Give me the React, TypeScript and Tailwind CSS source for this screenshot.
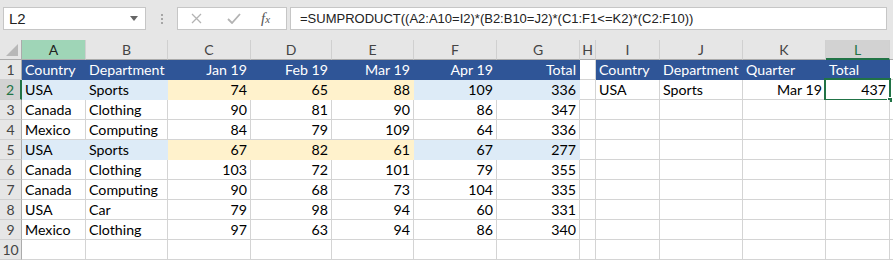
import React from 'react';

type Fill = 'none' | 'head' | 'blue' | 'yellow';

const colW = [
    'w-[22px]', 'w-[64px]', 'w-[82px]', 'w-[83px]', 'w-[81px]', 'w-[82px]', 'w-[83px]', 'w-[83px]',
    'w-[16px]', 'w-[64px]', 'w-[83px]', 'w-[83px]', 'w-[64px]',
];
const letters = ['A', 'B', 'C', 'D', 'E', 'F', 'G', 'H', 'I', 'J', 'K', 'L'];

const fillCls: Record<Fill, string> = {
    none: 'bg-white border-[#d4d4d4] text-black',
    head: 'bg-[#2f5597] border-[#2f5597] text-white',
    blue: 'bg-[#ddebf7] border-[#ddebf7] text-black',
    yellow: 'bg-[#fff2cc] border-[#fff2cc] text-black',
};

const data: (string | number)[][] = [
    ['Country', 'Department', 'Jan 19', 'Feb 19', 'Mar 19', 'Apr 19', 'Total', '', 'Country', 'Department', 'Quarter', 'Total'],
    ['USA', 'Sports', 74, 65, 88, 109, 336, '', 'USA', 'Sports', 'Mar 19', 437],
    ['Canada', 'Clothing', 90, 81, 90, 86, 347, '', '', '', '', ''],
    ['Mexico', 'Computing', 84, 79, 109, 64, 336, '', '', '', '', ''],
    ['USA', 'Sports', 67, 82, 61, 67, 277, '', '', '', '', ''],
    ['Canada', 'Clothing', 103, 72, 101, 79, 355, '', '', '', '', ''],
    ['Canada', 'Computing', 90, 68, 73, 104, 335, '', '', '', '', ''],
    ['USA', 'Car', 79, 98, 94, 60, 331, '', '', '', '', ''],
    ['Mexico', 'Clothing', 97, 63, 94, 86, 340, '', '', '', '', ''],
    ['', '', '', '', '', '', '', '', '', '', '', ''],
];

const fillFor = (r: number, c: number): Fill => {
    if (r === 0) return c === 7 ? 'none' : 'head';
    if (r === 1 || r === 4) {
        if (c === 0 || c === 1 || c === 5 || c === 6) return 'blue';
        if (c >= 2 && c <= 4) return 'yellow';
    }
    return 'none';
};

const rightAlign = (r: number, c: number) => {
    if (r === 0) return c >= 2 && c <= 6;
    if (c === 10 || c === 11) return true;
    return c >= 2 && c <= 6;
};

const Toolbar = () => (
    <div className="h-[40px] bg-[#e6e6e6] flex items-start pt-[7px] pl-[3px] gap-0">
        <div className="w-[143px] h-[23px] bg-white border border-[#c6c6c6] flex items-center justify-between pl-[5px] pr-[7px]">
            <span className="text-[15px] text-[#222] leading-none" style={{ fontFamily: '"Liberation Sans", Arial, sans-serif' }}>L2</span>
            <svg width="8" height="5" viewBox="0 0 8 5"><path d="M0 0h8L4 5z" fill="#666" /></svg>
        </div>
        <div className="w-[31px] h-[23px] flex flex-col items-center justify-center gap-[2px]">
            <span className="w-[2px] h-[2px] bg-[#a6a6a6]" />
            <span className="w-[2px] h-[2px] bg-[#a6a6a6]" />
            <span className="w-[2px] h-[2px] bg-[#a6a6a6]" />
        </div>
        <div className="w-[110px] h-[23px] bg-white border border-[#c6c6c6] flex items-center">
            <svg className="ml-[13px]" width="11" height="11" viewBox="0 0 11 11">
                <path d="M1 1L10 10M10 1L1 10" stroke="#b3b3b3" strokeWidth="1.3" />
            </svg>
            <svg className="ml-[25px]" width="14" height="11" viewBox="0 0 14 11">
                <path d="M1 6L5 10L13 1" stroke="#b3b3b3" strokeWidth="1.8" fill="none" />
            </svg>
            <span className="ml-[20px] text-[15px] italic text-[#555]" style={{ fontFamily: '"Liberation Serif", serif' }}>
                f<span className="text-[11px]">x</span>
            </span>
        </div>
        <div className="ml-[3px] w-[597px] h-[23px] bg-white border border-[#c6c6c6] flex items-center pl-[9px]">
            <span className="text-[13px] text-[#222] leading-none whitespace-nowrap" style={{ fontFamily: '"Liberation Sans", Arial, sans-serif' }}>
                =SUMPRODUCT((A2:A10=I2)*(B2:B10=J2)*(C1:F1&lt;=K2)*(C2:F10))
            </span>
        </div>
    </div>
);

const ColumnHeaders = () => (
    <div className="flex h-[20px]">
        <div className={`${colW[0]} shrink-0 h-[20px] bg-[#e6e6e6] border-r border-b border-[#ababab] relative`}>
            <svg className="absolute right-[3px] bottom-[3px]" width="12" height="12" viewBox="0 0 12 12">
                <path d="M12 0V12H0z" fill="#b8b8b8" />
            </svg>
        </div>
        {letters.map((l, i) => {
            const isA = l === 'A';
            const isL = l === 'L';
            const cls = isA
                ? 'bg-[#9fd5b7] border-b border-[#ababab] text-[#222]'
                : isL
                    ? 'bg-[#d2d2d2] border-b-2 border-b-[#217346] text-[#217346]'
                    : 'bg-[#e6e6e6] border-b border-[#ababab] text-[#444]';
            return (
                <div key={l} className={`${colW[i + 1]} shrink-0 h-[20px] border-r border-r-[#d0d0d0] flex items-center justify-center text-[14px] ${cls}`}>
                    {l}
                </div>
            );
        })}
        <div className="flex-1 h-[20px] bg-[#e6e6e6] border-b border-[#ababab]" />
    </div>
);

const Row = ({ cells, r }: { cells: (string | number)[]; r: number }) => {
    const selRow = r === 1;
    return (
        <div className="flex h-[20px]">
            <div
                className={`${colW[0]} shrink-0 h-[20px] border-b border-[#d0d0d0] flex items-center justify-center text-[14px] ${
                    selRow ? 'bg-[#d2d2d2] text-[#217346] border-r-2 border-r-[#217346]' : 'bg-[#e6e6e6] text-[#444] border-r border-r-[#ababab]'
                }`}
            >
                {r + 1}
            </div>
            {cells.map((v, c) => {
                const fill = fillFor(r, c);
                const selected = r === 1 && c === 11;
                return (
                    <div
                        key={c}
                        className={`${colW[c + 1]} shrink-0 h-[20px] border-r border-b flex items-center px-[3px] pt-[1px] text-[14.2px] whitespace-nowrap overflow-visible relative ${fillCls[fill]} ${
                            rightAlign(r, c) ? 'justify-end' : 'justify-start'
                        }`}
                    >
                        {v}
                        {selected && (
                            <>
                                <div className="absolute left-[-2px] top-[-2px] right-[-2px] bottom-[-2px] border-2 border-[#217346]" />
                                <div className="absolute right-[-4px] bottom-[-4px] w-[6px] h-[6px] bg-[#217346] border border-white" />
                            </>
                        )}
                    </div>
                );
            })}
            <div className="flex-1 h-[20px] border-b border-[#d4d4d4] bg-white" />
        </div>
    );
};

const App: React.FC = () => {
    return (
        <div className="w-[893px] h-[263px] overflow-hidden bg-white select-none" style={{ fontFamily: 'Lato, "Open Sans", sans-serif' }}>
            <Toolbar />
            <ColumnHeaders />
            {data.map((row, r) => (
                <Row key={r} cells={row} r={r} />
            ))}
        </div>
    );
};

export default App;
